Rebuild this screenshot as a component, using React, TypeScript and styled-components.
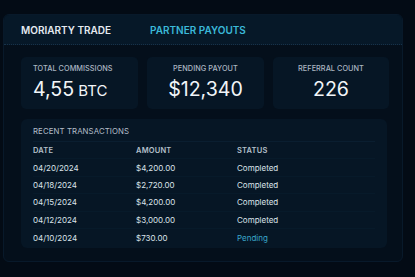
import React from "react";
import styled, { createGlobalStyle } from "styled-components";

const Global = createGlobalStyle`
  html, body { margin: 0; padding: 0; background: #030b15; }
  body { font-family: Inter, "Noto Sans", sans-serif; -webkit-font-smoothing: antialiased; }
  #root { width: 415px; height: 277px; overflow: hidden; }
`;

const Page = styled.div`
  width: 415px;
  height: 277px;
  padding: 14px 12px 0 3px;
  box-sizing: border-box;
`;

const Panel = styled.div`
  width: 400px;
  height: 248px;
  box-sizing: border-box;
  background: #040f1b;
  border: 1px solid #08192a;
  border-radius: 6px;
  overflow: hidden;
  display: flex;
  flex-direction: column;
`;

const Header = styled.div`
  height: 30px;
  box-sizing: border-box;
  background: #061828;
  border-bottom: 1px dotted #17324a;
  display: flex;
  align-items: center;
  gap: 39px;
  padding-left: 17px;
`;

const Tab = styled.div<{ $active?: boolean }>`
  font-size: 10px;
  font-weight: 600;
  letter-spacing: 0;
  color: ${(p) => (p.$active ? "#3bb9d9" : "#e4eaf0")};
`;

const Body = styled.div`
  padding: 12px 15px 0 17px;
  display: flex;
  flex-direction: column;
  gap: 10px;
`;

const Stats = styled.div`
  display: grid;
  grid-template-columns: 117px 117px 116px;
  gap: 9px;
`;

const Card = styled.div<{ $align?: "left" | "center" }>`
  height: 52px;
  box-sizing: border-box;
  background: #061625;
  border-radius: 5px;
  padding: 7px 12px 0;
  display: flex;
  flex-direction: column;
  align-items: ${(p) => (p.$align === "center" ? "center" : "flex-start")};
`;

const Label = styled.div`
  font-size: 7.3px;
  line-height: 10px;
  font-weight: 500;
  letter-spacing: 0.05px;
  color: #aab5c1;
  text-transform: uppercase;
`;

const Value = styled.div`
  margin-top: 3px;
  font-size: 19.6px;
  line-height: 24px;
  font-weight: 400;
  color: #f1f5f8;
  display: flex;
  align-items: baseline;
  gap: 4px;
`;

const Unit = styled.span`
  font-size: 15px;
`;

const TxCard = styled.div`
  height: 129px;
  box-sizing: border-box;
  background: #061625;
  border-radius: 6px;
  padding: 7px 12px 0;
`;

const TxTitle = styled.div`
  font-size: 7.8px;
  line-height: 11px;
  letter-spacing: 0.1px;
  color: #b3bdc8;
  padding-bottom: 4px;
  border-bottom: 1px solid #0a1e30;
`;

const Row = styled.div<{ $head?: boolean }>`
  display: grid;
  grid-template-columns: 103px 101px 1fr;
  height: 17.4px;
  box-sizing: border-box;
  align-items: center;
  font-size: ${(p) => (p.$head ? "7.5px" : "8px")};
  font-weight: ${(p) => (p.$head ? 600 : 400)};
  letter-spacing: ${(p) => (p.$head ? "0.2px" : "0")};
  color: ${(p) => (p.$head ? "#b5c0cb" : "#dbe3ea")};
  border-bottom: 1px solid #071a2a;
  &:last-child { border-bottom: none; }
`;

const Status = styled.span<{ $pending?: boolean }>`
  color: ${(p) => (p.$pending ? "#3aa7c9" : "#dbe3ea")};
`;

const txs = [
  ["04/20/2024", "$4,200.00", "Completed"],
  ["04/18/2024", "$2,720.00", "Completed"],
  ["04/15/2024", "$4,200.00", "Completed"],
  ["04/12/2024", "$3,000.00", "Completed"],
  ["04/10/2024", "$730.00", "Pending"],
];

export default function App() {
  return (
    <>
      <Global />
      <Page>
        <Panel>
          <Header>
            <Tab>MORIARTY TRADE</Tab>
            <Tab $active>PARTNER PAYOUTS</Tab>
          </Header>
          <Body>
            <Stats>
              <Card>
                <Label>Total Commissions</Label>
                <Value>
                  4,55 <Unit>BTC</Unit>
                </Value>
              </Card>
              <Card $align="center">
                <Label>Pending Payout</Label>
                <Value>$12,340</Value>
              </Card>
              <Card $align="center">
                <Label>Referral Count</Label>
                <Value>226</Value>
              </Card>
            </Stats>
            <TxCard>
              <TxTitle>RECENT TRANSACTIONS</TxTitle>
              <Row $head>
                <span>DATE</span>
                <span>AMOUNT</span>
                <span>STATUS</span>
              </Row>
              {txs.map(([d, a, s]) => (
                <Row key={d}>
                  <span>{d}</span>
                  <span>{a}</span>
                  <Status $pending={s === "Pending"}>{s}</Status>
                </Row>
              ))}
            </TxCard>
          </Body>
        </Panel>
      </Page>
    </>
  );
}
